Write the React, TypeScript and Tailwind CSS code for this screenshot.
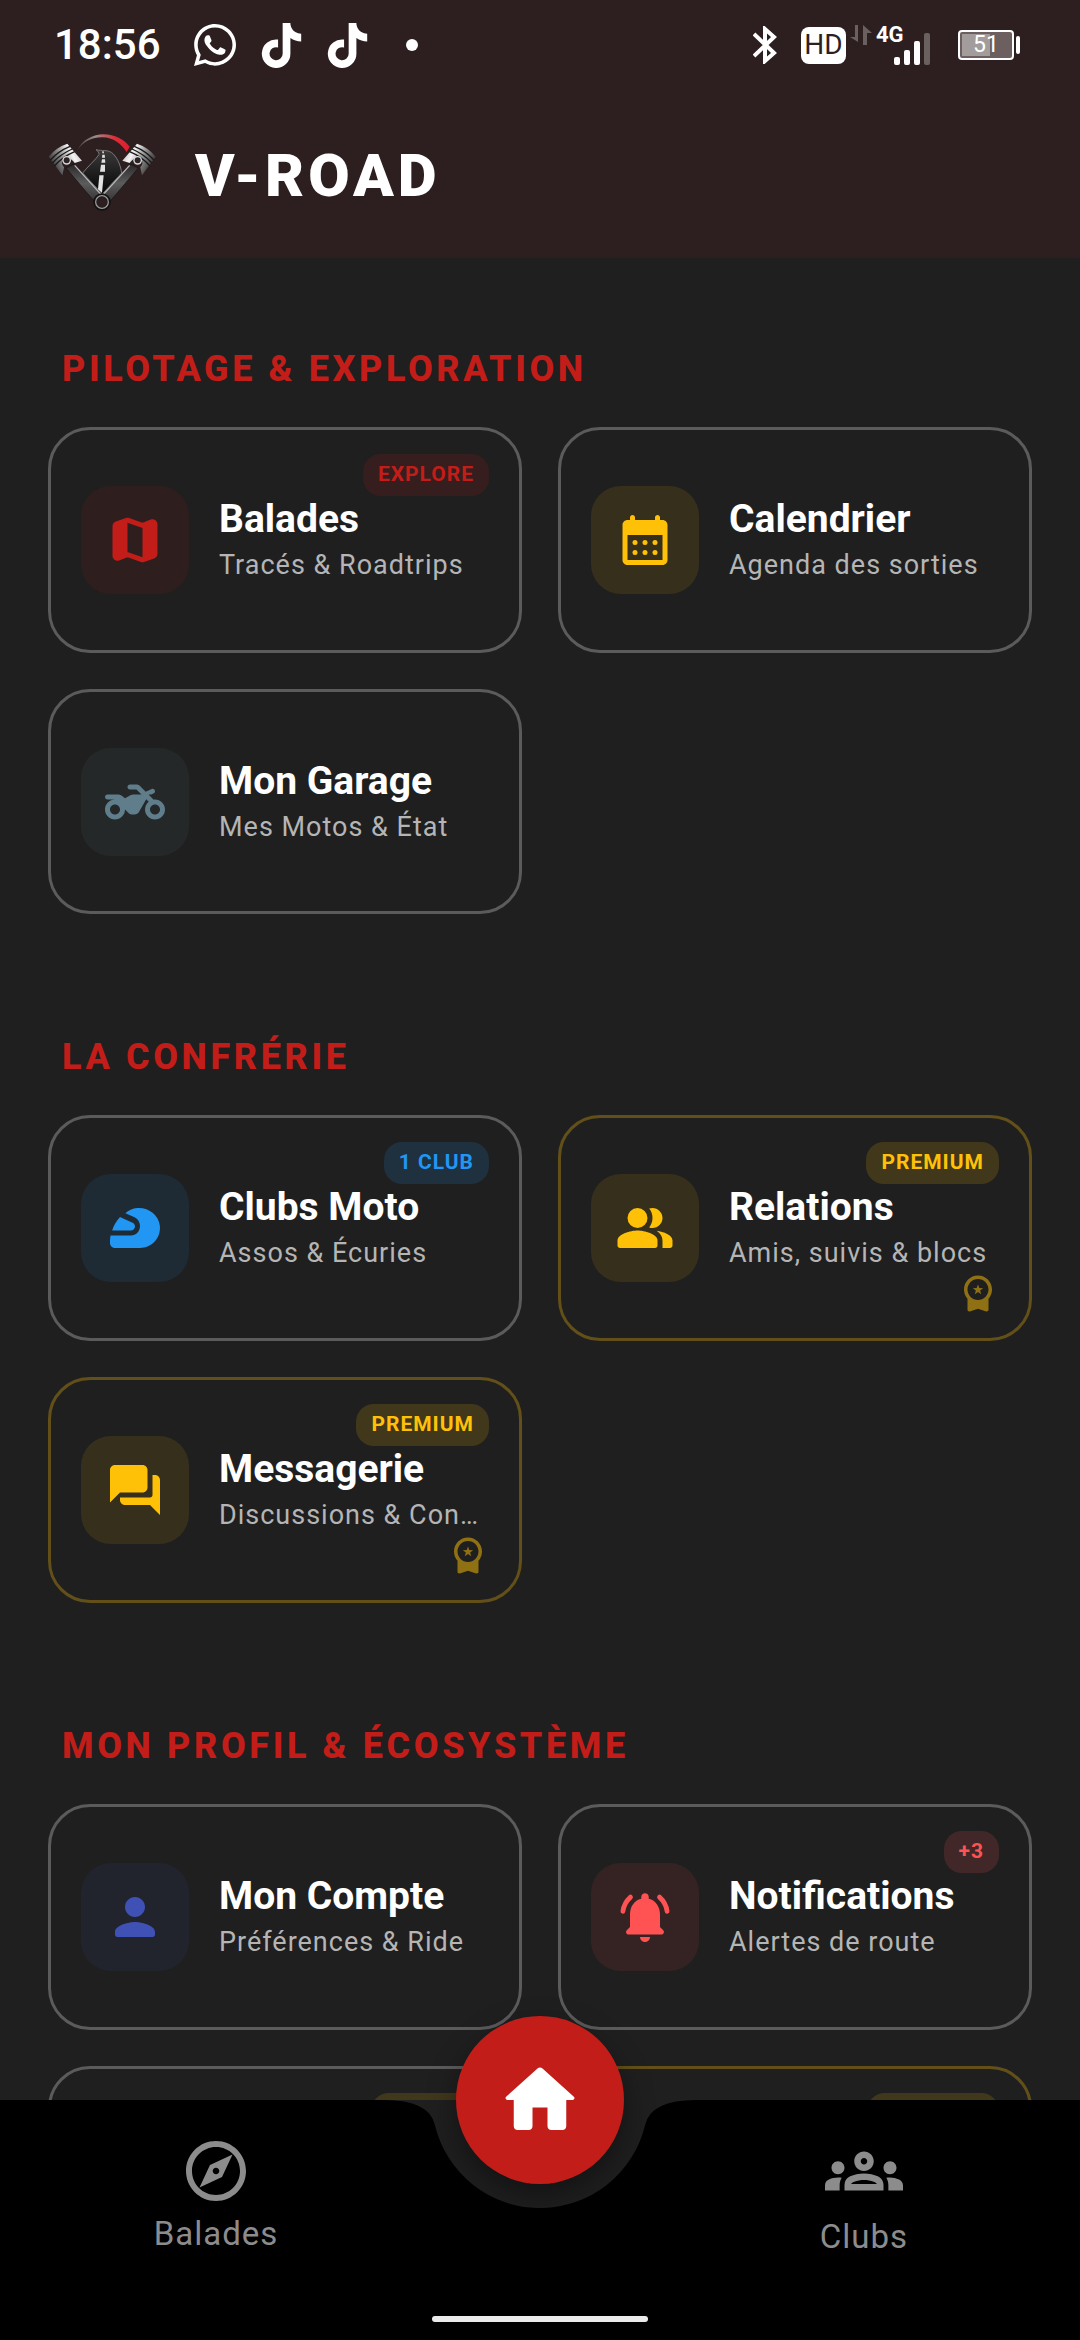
import React from "react";
import { FaWhatsapp, FaTiktok } from "react-icons/fa6";
import { MdOutlineExplore, MdOutlineGroups } from "react-icons/md";
import clsx from "clsx";

type Tone = "red" | "amber" | "slate" | "blue" | "indigo" | "coral";

const toneText: Record<Tone, string> = {
  red: "text-[#c21d19]",
  amber: "text-[#ffc107]",
  slate: "text-[#607d8b]",
  blue: "text-[#2196f3]",
  indigo: "text-[#3f51b5]",
  coral: "text-[#ff5252]",
};

const toneTile: Record<Tone, string> = {
  red: "bg-[#c21d19]/10",
  amber: "bg-[#ffc107]/10",
  slate: "bg-[#607d8b]/10",
  blue: "bg-[#2196f3]/10",
  indigo: "bg-[#3f51b5]/10",
  coral: "bg-[#ff5252]/10",
};

const toneBadge: Record<Tone, string> = {
  red: "bg-[#c21d19]/15",
  amber: "bg-[#ffc107]/15",
  slate: "bg-[#607d8b]/15",
  blue: "bg-[#2196f3]/15",
  indigo: "bg-[#3f51b5]/15",
  coral: "bg-[#ff5252]/15",
};

function Icon({ children, className = "size-[60px]" }: { children: React.ReactNode; className?: string }) {
  return (
    <svg viewBox="0 0 24 24" fill="currentColor" className={className} aria-hidden="true">
      {children}
    </svg>
  );
}

const MapIcon = () => (
  <Icon>
    <path d="M14.65 4.98l-5-1.75c-.42-.15-.88-.15-1.3-.01L4.36 4.56C3.55 4.84 3 5.6 3 6.46v11.85c0 1.41 1.41 2.37 2.72 1.86l2.93-1.14c.22-.09.47-.09.69-.01l5 1.75c.42.15.88.15 1.3.01l3.99-1.34c.81-.27 1.36-1.04 1.36-1.9V5.69c0-1.41-1.41-2.37-2.72-1.86l-2.93 1.14c-.22.08-.46.09-.69.01zM15 18.89l-6-2.11V5.11l6 2.11v11.67z" />
  </Icon>
);

const CalendarIcon = () => (
  <Icon>
    <path d="M19 4h-1V3c0-.55-.45-1-1-1s-1 .45-1 1v1H8V3c0-.55-.45-1-1-1s-1 .45-1 1v1H5c-1.11 0-1.99.9-1.99 2L3 20c0 1.1.89 2 2 2h14c1.1 0 2-.9 2-2V6c0-1.1-.9-2-2-2zm0 16H5V10h14v10z" />
    {[8, 12, 16].map((x) => (
      <React.Fragment key={x}>
        <circle cx={x} cy="13" r="1" />
        <circle cx={x} cy="17" r="1" />
      </React.Fragment>
    ))}
  </Icon>
);

const MotorcycleIcon = () => (
  <Icon>
    <path d="M20 11c-.18 0-.36.03-.53.05L17.41 9l1.02-.02.13.04.99-.5c.27-.13.45-.41.45-.72 0-.9-.66-1.3-1.3-1L16.28 7.86 14 5.59C13.62 5.21 13.11 5 12.58 5H10c-.55 0-1 .45-1 1s.45 1 1 1h2.59l2 2H11.3c-.4 0-.8.09-1.16.27L8 10.5 6.6 9.39C6.2 9.14 5.7 9 5.2 9H1c-.55 0-1 .45-1 1s.45 1 1 1h3c-2.21 0-4 1.79-4 4s1.79 4 4 4 4-1.79 4-4l1.41 1.41c.38.38.89.59 1.42.59h1.01c.72 0 1.38-.38 1.74-1.01l2.91-5.09 1.01 1.01A4.02 4.02 0 0 0 16 15c0 2.21 1.79 4 4 4s4-1.79 4-4-1.79-4-4-4zM4 17c-1.1 0-2-.9-2-2s.9-2 2-2 2 .9 2 2-.9 2-2 2zm16 0c-1.1 0-2-.9-2-2s.9-2 2-2 2 .9 2 2-.9 2-2 2z" />
  </Icon>
);

const HelmetIcon = () => (
  <Icon>
    <path d="M12 11.39c0-.65-.39-1.23-.98-1.48L6 7.6C4.5 9.3 3.3 11.25 2.85 13h7.54c.89 0 1.61-.72 1.61-1.61z" />
    <path d="M21.96 11.22c-.41-4.41-4.56-7.49-8.98-7.2-2.01.16-3.6.94-4.83 2.04l3.64 1.61c1.33.57 2.2 2.07 2.2 3.52 0 2.19-1.62 3.81-3.61 3.81H2.21C2 16.31 2 17.2 2 17.2v.8c0 1.1.9 2 2 2h10c4.67 0 8.41-4.01 7.96-8.78z" />
  </Icon>
);

const PeopleIcon = () => (
  <Icon>
    <path d="M16.67 13.13C18.04 14.06 19 15.32 19 17v3h3c.55 0 1-.45 1-1v-2c0-2.18-3.57-3.47-6.33-3.87z" />
    <circle cx="9" cy="8" r="4" />
    <path d="M15 12c2.21 0 4-1.79 4-4s-1.79-4-4-4c-.47 0-.91.1-1.33.24C14.5 5.27 15 6.58 15 8s-.5 2.73-1.33 3.76c.42.14.86.24 1.33.24z" />
    <path d="M9 13c-2.67 0-8 1.34-8 4v2c0 .55.45 1 1 1h14c.55 0 1-.45 1-1v-2c0-2.66-5.33-4-8-4z" />
  </Icon>
);

const ForumIcon = () => (
  <Icon>
    <path d="M20 6h-1v8c0 .55-.45 1-1 1H6v1c0 1.1.9 2 2 2h10l4 4V8c0-1.1-.9-2-2-2zm-3 5V4c0-1.1-.9-2-2-2H4c-1.1 0-2 .9-2 2v13l4-4h9c1.1 0 2-.9 2-2z" />
  </Icon>
);

const PersonIcon = () => (
  <Icon>
    <path d="M12 12c2.21 0 4-1.79 4-4s-1.79-4-4-4-4 1.79-4 4 1.79 4 4 4zm0 2c-2.67 0-8 1.34-8 4v1c0 .55.45 1 1 1h14c.55 0 1-.45 1-1v-1c0-2.66-5.33-4-8-4z" />
  </Icon>
);

const BellIcon = () => (
  <Icon>
    <path d="M18 16v-5c0-3.07-1.64-5.64-4.5-6.32V4c0-.83-.67-1.5-1.5-1.5s-1.5.67-1.5 1.5v.68C7.63 5.36 6 7.92 6 11v5l-1.29 1.29c-.63.63-.19 1.71.7 1.71h13.17c.89 0 1.34-1.08.71-1.71L18 16z" />
    <path d="M12 22c1.1 0 2-.9 2-2h-4c0 1.1.89 2 2 2z" />
    <path
      d="M6.2 4.05Q3.6 6.4 3.15 9.75M17.8 4.05Q20.4 6.4 20.85 9.75"
      fill="none"
      stroke="currentColor"
      strokeWidth="1.9"
      strokeLinecap="round"
    />
  </Icon>
);

const HomeIcon = () => (
  <Icon className="size-[90px]">
    <path d="M10 19v-5h4v5c0 .55.45 1 1 1h3c.55 0 1-.45 1-1v-7h1.7c.46 0 .68-.57.33-.87L12.67 3.6c-.38-.34-.96-.34-1.34 0l-8.36 7.53c-.34.3-.13.87.33.87H5v7c0 .55.45 1 1 1h3c.55 0 1-.45 1-1z" />
  </Icon>
);

const MedalIcon = () => (
  <Icon className="size-[42px]">
    <path d="M20 10c0-4.42-3.58-8-8-8s-8 3.58-8 8c0 2.03.76 3.87 2 5.28v6.33c0 .68.67 1.16 1.32.95L12 21l4.68 1.56c.65.21 1.32-.27 1.32-.95v-6.33A7.96 7.96 0 0 0 20 10zm-8 6c-3.31 0-6-2.69-6-6s2.69-6 6-6 6 2.69 6 6-2.69 6-6 6z" />
    <path d="M12 7.1l.75 2.05 2.2.08-1.72 1.35.6 2.1L12 11.45l-1.83 1.23.6-2.1-1.72-1.35 2.2-.08z" />
  </Icon>
);

function Piston() {
  return (
    <g>
      <path d="M108 148 L132 136 L214 226 L196 252 Z" fill="url(#rod)" stroke="#111" strokeWidth="2" />
      <path d="M134 140 L212 226" stroke="#b9b9b9" strokeWidth="4" />
      <path d="M56 114 Q78 86 112 75 L156 126 Q142 130 134 133 Q120 112 100 122 Q90 134 102 146 L97 170 Z" fill="url(#piston)" />
      <path d="M61 124 Q84 98 120 83 M67 133 Q92 106 127 91 M73 142 Q98 114 134 99" stroke="#1a1717" strokeWidth="4" fill="none" />
      <circle cx="110" cy="125" r="13" fill="#d9d9d9" />
      <circle cx="110" cy="125" r="9" fill="#2a2424" />
    </g>
  );
}

function Logo() {
  return (
    <svg viewBox="54 40 324 250" className="w-[108px]" role="img" aria-label="V-Road">
      <defs>
        <linearGradient id="speed">
          <stop offset="0" stopColor="#4a4040" />
          <stop offset="0.35" stopColor="#a08a8a" />
          <stop offset="0.7" stopColor="#d8313a" />
          <stop offset="1" stopColor="#e01b2c" />
        </linearGradient>
        <linearGradient id="piston" x1="0" y1="0.8" x2="1" y2="0.3">
          <stop offset="0" stopColor="#161414" />
          <stop offset="0.45" stopColor="#8c8c8c" />
          <stop offset="0.75" stopColor="#f4f4f4" />
          <stop offset="1" stopColor="#bdbdbd" />
        </linearGradient>
        <linearGradient id="rod" x1="0" y1="0" x2="0" y2="1">
          <stop offset="0" stopColor="#2b2828" />
          <stop offset="0.5" stopColor="#5c5c5c" />
          <stop offset="1" stopColor="#343131" />
        </linearGradient>
        <linearGradient id="road" x1="0" y1="0" x2="0" y2="1">
          <stop offset="0" stopColor="#3c3a3a" />
          <stop offset="1" stopColor="#050505" />
        </linearGradient>
      </defs>
      <path d="M142 95C158 62 190 47 220 47C255 47 282 62 299 84L290 100C272 74 250 57 218 56C190 55 162 66 142 95Z" fill="url(#speed)" />
      <path d="M158 163C174 143 196 124 207 108C208 102 203 97 198 93C214 98 236 91 250 106C265 122 272 143 275 163L217 226Z" fill="url(#road)" stroke="#777" strokeWidth="3" />
      <path d="M217 98L221 98L222 104L217 104ZM217 108L224 108L225 117L216 117ZM216 122L225 122L226 132L214 132ZM213 138L225 138L225 159L210 159ZM208 170L221 170L216 222L204 212Z" fill="#e2e2e2" />
      <Piston />
      <g transform="translate(433 0) scale(-1 1)">
        <Piston />
      </g>
      <circle cx="216" cy="250" r="21" fill="#2d1f1f" stroke="#141212" strokeWidth="11" />
      <circle cx="216" cy="250" r="19" fill="none" stroke="#9a9a9a" strokeWidth="4" />
    </svg>
  );
}

function StatusBar() {
  return (
    <div className="flex h-[90px] items-center justify-between pr-[60px] pl-[54px] text-white">
      <div className="flex items-center">
        <span className="text-[42px] leading-[48px] font-medium">18:56</span>
        <FaWhatsapp className="ml-[30px] size-[48px]" />
        <FaTiktok className="ml-5 size-[45px]" />
        <FaTiktok className="ml-[21px] size-[45px]" />
        <span className="ml-9 size-3 rounded-full bg-white" />
      </div>
      <div className="flex items-center">
        <svg viewBox="0 0 24 38" className="h-[38px] w-6" fill="none" stroke="currentColor" strokeWidth="4" aria-label="Bluetooth">
          <path d="M1 8L21 27L12 35V3L21 11L1 30" />
        </svg>
        <span className="ml-6 flex h-[37px] w-[45px] items-center justify-center rounded-lg bg-white text-[28px] leading-[36px] text-[#2d1f1f]">
          HD
        </span>
        <span className="ml-1 flex h-10 items-start">
          <svg viewBox="0 0 22 20" className="h-5 w-[22px]" fill="#6b6060" aria-hidden="true">
            <path d="M5 0h3v17L0 12h5zM13 20V0l9 8h-5v12z" />
          </svg>
        </span>
        <span className="relative ml-1 block h-10 w-[46px]">
          <span className="absolute -top-1 left-0 text-[22px] leading-[28px] font-bold">4G</span>
          <svg viewBox="0 0 54 40" className="absolute top-0 left-0 h-10 w-[54px]" fill="currentColor" aria-hidden="true">
            <rect x="18" y="32" width="6" height="8" rx="2" />
            <rect x="28" y="25" width="6" height="15" rx="2" />
            <rect x="38" y="16" width="6" height="24" rx="2" />
            <rect x="48" y="8" width="6" height="32" rx="2" fill="#6b6060" />
          </svg>
        </span>
        <span className="ml-9 flex h-[30px] w-[56px] rounded-sm border-2 border-white bg-[#6b5f60] p-0.5">
          <span className="relative flex w-full items-center justify-center">
            <span className="absolute inset-y-0 left-0 w-7/12 bg-[#a39c9c]" />
            <span className="relative text-[23px] leading-[24px]">51</span>
          </span>
        </span>
        <span className="ml-0.5 h-[18px] w-1 rounded-sm bg-white" />
      </div>
    </div>
  );
}

type Item = {
  title: string;
  subtitle: string;
  tone: Tone;
  icon: React.ReactNode;
  badge?: string;
  premium?: boolean;
};

const sections: { title: string; items: Item[] }[] = [
  {
    title: "PILOTAGE & EXPLORATION",
    items: [
      { title: "Balades", subtitle: "Tracés & Roadtrips", tone: "red", icon: <MapIcon />, badge: "EXPLORE" },
      { title: "Calendrier", subtitle: "Agenda des sorties", tone: "amber", icon: <CalendarIcon /> },
      { title: "Mon Garage", subtitle: "Mes Motos & État", tone: "slate", icon: <MotorcycleIcon /> },
    ],
  },
  {
    title: "LA CONFRÉRIE",
    items: [
      { title: "Clubs Moto", subtitle: "Assos & Écuries", tone: "blue", icon: <HelmetIcon />, badge: "1 CLUB" },
      { title: "Relations", subtitle: "Amis, suivis & blocs", tone: "amber", icon: <PeopleIcon />, badge: "PREMIUM", premium: true },
      { title: "Messagerie", subtitle: "Discussions & Con…", tone: "amber", icon: <ForumIcon />, badge: "PREMIUM", premium: true },
    ],
  },
  {
    title: "MON PROFIL & ÉCOSYSTÈME",
    items: [
      { title: "Mon Compte", subtitle: "Préférences & Ride", tone: "indigo", icon: <PersonIcon /> },
      { title: "Notifications", subtitle: "Alertes de route", tone: "coral", icon: <BellIcon />, badge: "+3" },
    ],
  },
];

const cardFrame = "relative aspect-[21/10] w-full rounded-[42px] border-3";

function Card({ item }: { item: Item }) {
  return (
    <button
      type="button"
      className={clsx(
        cardFrame,
        "flex items-center gap-[30px] px-[30px] text-left",
        item.premium ? "border-[#ffc107]/30" : "border-[#5b5b5b]",
      )}
    >
      <span className={clsx("flex size-[108px] shrink-0 items-center justify-center rounded-[30px]", toneTile[item.tone], toneText[item.tone])}>
        {item.icon}
      </span>
      <span className="flex min-w-0 flex-1 flex-col">
        <span className="truncate text-[39px] leading-[50px] font-bold text-white">{item.title}</span>
        <span className="truncate text-[27px] leading-[42px] tracking-[1px] text-[#b5b5b5]">{item.subtitle}</span>
      </span>
      {item.badge && (
        <span
          className={clsx(
            "absolute top-6 right-[30px] rounded-[18px] px-[15px] pt-2 pb-2.5 text-[21px] leading-[24px] font-bold tracking-[1px]",
            toneBadge[item.tone],
            toneText[item.tone],
          )}
        >
          {item.badge}
        </span>
      )}
      {item.premium && (
        <span className="absolute right-[30px] bottom-6 text-[#ffc107]/50">
          <MedalIcon />
        </span>
      )}
    </button>
  );
}

function NavBackground() {
  return (
    <div className="absolute inset-0 flex flex-col" aria-hidden="true">
      <div className="flex h-[108px]">
        <div className="flex-1 bg-black" />
        <svg viewBox="0 0 312 108" className="h-[108px] w-[312px]">
          <path d="M0 0Q45 0 50.9 24.9A108 108 0 0 0 261.1 24.9Q267 0 312 0V108H0Z" />
        </svg>
        <div className="flex-1 bg-black" />
      </div>
      <div className="flex-1 bg-black" />
    </div>
  );
}

function BottomNav() {
  const link =
    "flex flex-1 flex-col items-center justify-center gap-2 text-[33px] leading-[38px] tracking-[1px] text-[#8c8c8c]";
  return (
    <nav className="relative h-60 shrink-0">
      <div className="absolute inset-x-0 top-0 flex justify-center">
        <span className="-mt-[84px] size-[168px] rounded-full shadow-[0_12px_30px_rgba(0,0,0,0.4)]" />
      </div>
      <NavBackground />
      <div className="relative flex h-[188px]">
        <a href="#balades" className={link}>
          <MdOutlineExplore className="size-[72px]" />
          Balades
        </a>
        <div className="flex w-[216px] items-start justify-center">
          <button
            type="button"
            aria-label="Accueil"
            className="-mt-[84px] flex size-[168px] items-center justify-center rounded-full bg-[#c21d19] text-white"
          >
            <HomeIcon />
          </button>
        </div>
        <a href="#clubs" className={link}>
          <MdOutlineGroups className="size-[78px]" />
          Clubs
        </a>
      </div>
      <div className="relative mx-auto mt-7 h-1.5 w-[216px] rounded-full bg-[#ebebeb]" />
    </nav>
  );
}

export default function App() {
  return (
    <div className="relative flex h-screen flex-col overflow-hidden bg-[#1f1f1f] font-['Roboto',sans-serif]">
      <header className="shrink-0 bg-[#2d1f1f]">
        <StatusBar />
        <div className="flex h-[168px] items-center gap-[39px] px-12">
          <Logo />
          <h1 className="pt-1 text-[60px] leading-[72px] font-black tracking-[4px] text-white">V-ROAD</h1>
        </div>
      </header>
      <main className="flex min-h-0 flex-1 flex-col gap-[122px] overflow-y-auto px-12 pt-[90px] [scrollbar-width:none]">
        {sections.map((section, i) => (
          <section key={section.title}>
            <h2 className="mb-9 pl-3.5 text-[36px] leading-[43px] font-extrabold tracking-widest text-[#c21d19]">{section.title}</h2>
            <div className="grid grid-cols-2 gap-9">
              {section.items.map((item) => (
                <Card key={item.title} item={item} />
              ))}
              {i === sections.length - 1 && (
                <>
                  <div className={clsx(cardFrame, "border-[#5b5b5b]")}>
                    <span className="absolute top-6 right-[30px] h-[42px] w-[118px] rounded-[18px] bg-[#ffc107]/15" />
                  </div>
                  <div className={clsx(cardFrame, "border-[#ffc107]/30")}>
                    <span className="absolute top-6 right-[30px] h-[42px] w-[132px] rounded-[18px] bg-[#ffc107]/15" />
                  </div>
                </>
              )}
            </div>
          </section>
        ))}
      </main>
      <BottomNav />
    </div>
  );
}
